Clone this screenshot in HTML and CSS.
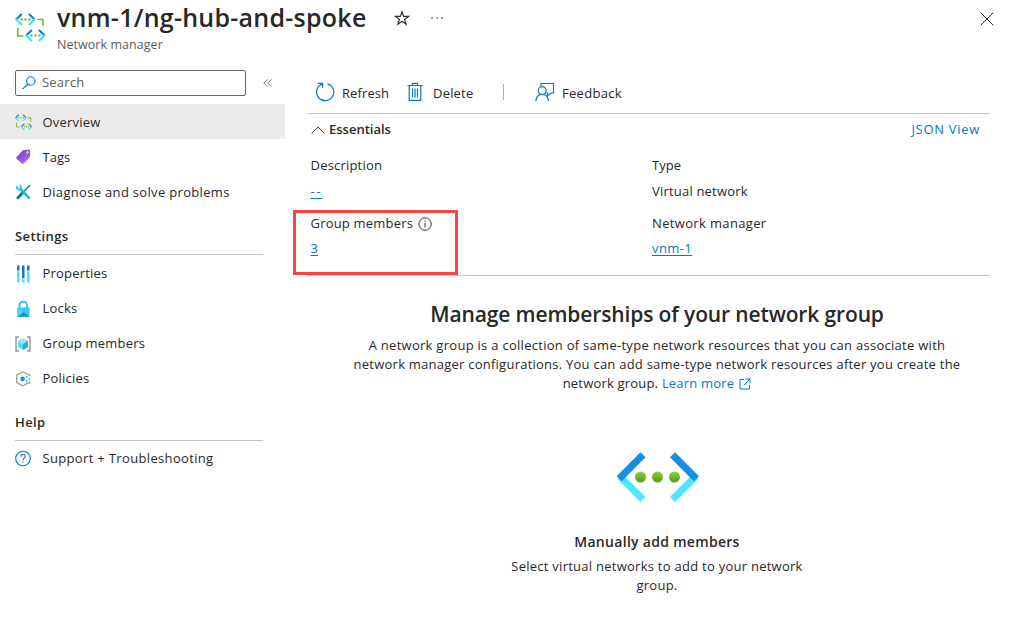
FILE: index.html
```html
<!DOCTYPE html>
<html lang="en">
<head>
<meta charset="utf-8">
<title>vnm-1/ng-hub-and-spoke</title>
<link rel="stylesheet" href="styles.css">
</head>
<body>
<svg class="defs" width="0" height="0" aria-hidden="true">
  <defs>
    <linearGradient id="green" x1="0" y1="0" x2="0" y2="1"><stop offset="0" stop-color="#86d633"/><stop offset="1" stop-color="#5e9624"/></linearGradient>
    <linearGradient id="purple" x1="0" y1="0" x2="1" y2="1"><stop offset="0" stop-color="#6a2fc0"/><stop offset="1" stop-color="#b382ea"/></linearGradient>
    <symbol id="manager" viewBox="0 0 32 32">
      <g fill="none" stroke-width="2.1">
        <path d="M1 8.700 6.800 3M14 3l5.800 5.700" stroke="#0f79d4"/>
        <path d="M1 8.100 6.800 14M14 14l5.800-5.900" stroke="#45ddfb"/>
        <path d="M11 24.700 16.800 19M24 19l5.800 5.700" stroke="#0f79d4"/>
        <path d="M11 24.100 16.800 30M24 30l5.800-5.900" stroke="#45ddfb"/>
        <path d="M22.500 8.500H28v6.800M2.800 17v8h5.500" stroke="#76b82a" stroke-width="1.600"/>
      </g>
      <g fill="#76bc2d"><circle cx="6.500" cy="8.500" r="1.200"/><circle cx="10.500" cy="8.500" r="1.200"/><circle cx="14.500" cy="8.500" r="1.200"/><circle cx="16.500" cy="24.500" r="1.200"/><circle cx="20.500" cy="24.500" r="1.200"/><circle cx="24.500" cy="24.500" r="1.200"/></g>
    </symbol>
  </defs>
</svg>

<header class="header">
  <svg class="header-icon" width="32" height="32"><use href="#manager"/></svg>
  <div class="heading">
    <div class="title-row">
      <h1 class="title">vnm-1/ng-hub-and-spoke</h1>
      <svg class="star" width="16" height="16" viewBox="0 0 16 16" fill="none" stroke="#323130" stroke-width="1.2"><path d="M8 1.800l1.600 4.600h5l-4 3 1.500 4.800L8 11.300l-4.100 2.900 1.500-4.800-4-3h5z"/></svg>
      <svg class="more" width="14" height="4" viewBox="0 0 14 4" fill="#323130"><circle cx="2" cy="2" r=".8"/><circle cx="7" cy="2" r=".8"/><circle cx="12" cy="2" r=".8"/></svg>
    </div>
    <div class="subtitle">Network manager</div>
  </div>
  <svg class="close" width="14" height="14" viewBox="0 0 14 14" stroke="#323130" stroke-width="1"><path d="M.7.7l12.600 12.600M13.300.7.7 13.300"/></svg>
</header>

<div class="body">
  <nav class="sidebar">
    <div class="search-row">
      <div class="search">
        <svg width="14" height="14" viewBox="0 0 14 14" fill="none" stroke="#0078d4" stroke-width="1.1"><circle cx="8.800" cy="5" r="4.200"/><path d="M5.800 8 .6 13.200"/></svg>
        <span>Search</span>
      </div>
      <svg class="collapse" width="9" height="8" viewBox="0 0 9 8" fill="none" stroke="#605e5c" stroke-width=".9"><path d="M4.400.4.8 4l3.600 3.600M8.400.4 4.800 4l3.600 3.600"/></svg>
    </div>

    <div class="top-items">
      <a class="item active"><svg width="18" height="18" viewBox="0 0 32 32"><use href="#manager"/></svg><span>Overview</span></a>
      <a class="item"><svg width="18" height="18" viewBox="0 0 18 18"><path d="M8 2.300 13.800 1.500q1.400 0 1.400 1.400l-.2 5.600q0 .6-.5 1L8.700 15.500q-.9.800-1.800 0L1.600 10.700q-.8-.8.1-1.700z" fill="url(#purple)"/><circle cx="12.600" cy="4.600" r="1.300" fill="#f1e9ff"/><path d="M12.500 4.600q2 .6 1.500 2.500" fill="none" stroke="#54269c" stroke-width=".8"/></svg><span class="t-tags">Tags</span></a>
      <a class="item"><svg width="18" height="18" viewBox="0 0 18 18" fill="none" stroke-linecap="round"><path d="M14.600 2.600 9.400 8" stroke="#198ab3" stroke-width="1.600"/><path d="M8 9.500 2.900 14.700" stroke="#1578a6" stroke-width="3"/><path d="M5.300 6 14.100 14.900" stroke="#1fb6df" stroke-width="2.500"/><path d="M1.800 3.700Q1.900 6.700 4.700 6.600 7.100 5.600 5.500 2.500" stroke="#32cdef" stroke-width="2"/></svg><span class="t-diag">Diagnose and solve problems</span></a>
    </div>

    <h2 class="group">Settings</h2>
    <a class="item"><svg width="18" height="18" viewBox="0 0 18 18"><path fill="#0f78d4" d="M2 .5h2.500v5H2zM7 .5h2.500v12.700H7zM12 .5h2.500v5H12z"/><path fill="#4bdcfb" d="M2 6.200h2.500v11.300H2zM7 14.300h2.500v3.200H7zM12 6.200h2.500v11.300H12z"/></svg><span>Properties</span></a>
    <a class="item"><svg width="18" height="18" viewBox="0 0 18 18"><path d="M4.500 8V5.300a3.700 3.700 0 0 1 7.500 0V8" fill="none" stroke="#27bce5" stroke-width="1.800"/><rect x="2" y="7.400" width="12.600" height="9.600" rx=".7" fill="#36cdee"/><path d="M2.300 16.800 8.300 11.700l6 5.100z" fill="#1597c5"/><path d="M2.300 7.800 8.300 12.200 2.100 16.800z" fill="#55dcf8"/></svg><span>Locks</span></a>
    <a class="item"><svg width="18" height="18" viewBox="0 0 18 18"><path d="M4 2H1v14h3M12 2h3v14h-3" fill="none" stroke="#949494" stroke-width="1.400"/><path d="M8 3.200 13 6v5.900l-5 3-5-3V6z" fill="#50e1fb"/><path d="M3 6l5 3 5-3-5-2.800z" fill="#91ecfb"/><path d="M8 9v5.900l5-3V6z" fill="#25afd9"/></svg><span>Group members</span></a>
    <a class="item"><svg width="18" height="18" viewBox="0 0 18 18"><path d="M13.300 5V4.800L7.700 1.700 1.700 5v7.600l6 3.300 5.600-3.100v-.4" fill="none" stroke="#999" stroke-width="1.200"/><circle cx="7.600" cy="8.900" r="2.300" fill="#1696c8"/><g fill="#32bede"><circle cx="11.700" cy="6.700" r="1"/><circle cx="11.700" cy="11" r="1"/><circle cx="14.400" cy="5" r="1"/><circle cx="14.400" cy="8.900" r="1"/><circle cx="14.400" cy="12.700" r="1"/></g></svg><span>Policies</span></a>

    <h2 class="group help">Help</h2>
    <a class="item"><svg width="18" height="18" viewBox="0 0 18 18" fill="none" stroke="#0078d4" stroke-width="1.100"><circle cx="8" cy="8.500" r="7.300"/><path d="M5.800 6.700C5.800 5.200 6.700 4.500 8 4.500s2.200.8 2.200 2C10.200 8.100 8 8.200 8 10.200M8 11.500v1.300"/></svg><span class="t-support">Support + Troubleshooting</span></a>
  </nav>

  <main class="main">
    <div class="toolbar">
      <a class="tool refresh"><svg width="20" height="20" viewBox="0 0 20 20" fill="none" stroke="#0078d4" stroke-width="1.200"><path d="M12.500 1.800A8.600 8.600 0 1 1 7 2.100M3 1.300h4.600v4.500"/></svg><span>Refresh</span></a>
      <a class="tool delete"><svg width="16" height="20" viewBox="0 0 16 20" fill="none" stroke="#0078d4" stroke-width="1.200"><path d="M.5 3.500h15M5.500 3.300V1.400h5v1.900M2.200 3.600v14.800h11.600V3.600"/><path d="M5.500 6.500v9M8 6.500v9M10.500 6.500v9"/></svg><span>Delete</span></a>
      <i class="divider"></i>
      <a class="tool feedback"><svg width="20" height="20" viewBox="0 0 20 20" fill="none" stroke="#0078d4" stroke-width="1.200"><path d="M6 4.200V1.500h12.500V11H16l-3.500 2.500V11h-1"/><circle cx="7.200" cy="8.700" r="4"/><path d="M1 19v-1.500q1-3.800 4-5M9.300 12.500q3.200 1.300 3.900 5V19"/></svg><span>Feedback</span></a>
    </div>

    <section class="essentials">
      <div class="essentials-head">
        <svg width="14" height="8" viewBox="0 0 14 8" fill="none" stroke="#323130" stroke-width=".9"><path d="M.7 7.300 7 1l6.300 6.300"/></svg>
        <h3 class="essentials-title">Essentials</h3>
        <a class="json">JSON View</a>
      </div>
      <dl class="facts">
        <div class="fact"><dt>Description</dt><dd><a class="link dashes">--</a></dd></div>
        <div class="fact"><dt class="t-type">Type</dt><dd>Virtual network</dd></div>
        <div class="fact low"><dt class="t-group">Group members <svg width="14" height="14" viewBox="0 0 14 14" fill="none" stroke="#323130"><circle cx="7" cy="7" r="6.200"/><path d="M7 6v4.300M7 3.500v1.200"/></svg></dt><dd><a class="link">3</a></dd></div>
        <div class="fact low"><dt class="t-nm">Network manager</dt><dd><a class="link t-vnm">vnm-1</a></dd></div>
      </dl>
      <div class="highlight"></div>
    </section>

    <section class="intro">
      <h2 class="intro-title">Manage memberships of your network group</h2>
      <p class="intro-text"><span class="l1">A network group is a collection of same-type network resources that you can associate with</span><br><span class="l2">network manager configurations. You can add same-type network resources after you create the</span><br><span>network group. <a class="learn">Learn more <svg width="12" height="12" viewBox="0 0 12 12" fill="none" stroke="#0078d4"><path d="M5 1.500H1v9.500h9.500V7M6.500 1h4.500v4.500M11 1 5 7"/></svg></a></span></p>
      <svg class="art" width="84" height="52" viewBox="0 0 84 52">
        <g fill="none" stroke-width="7.200" stroke-linejoin="round">
          <path d="M27 48.500 4 25.500M56.500 48.500 80 25" stroke="#50e6ff"/>
          <path d="M27 3.800 3.200 27.700M56.500 3.800l23.900 23.900" stroke="#1490df"/>
        </g>
        <g fill="url(#green)"><circle cx="24.500" cy="26" r="5.500"/><circle cx="41.500" cy="26" r="5.500"/><circle cx="58.500" cy="26" r="5.500"/></g>
      </svg>
      <h3 class="add-title">Manually add members</h3>
      <p class="add-text">Select virtual networks to add to your network<br>group.</p>
    </section>
  </main>
</div>
</body>
</html>
```
FILE: styles.css
```css
* { box-sizing: border-box; }
body {
  margin: 0;
  height: 640px;
  overflow: hidden;
  background: #fff;
  color: #292827;
  font: 13px/19px "Open Sans", "Noto Sans", sans-serif;
  letter-spacing: .2px;
}
h1, h2, h3, p, dl, dt, dd { margin: 0; font: inherit; }
svg { flex: none; display: block; }
.defs { position: absolute; }
span, h1, h2, h3, a { white-space: nowrap; }

.header { display: flex; height: 70px; padding: 0 19px 0 15px; }
.header-icon { margin: 11px 10px 0 0; }
.title-row { display: flex; align-items: center; height: 36px; }
.title { width: 337px; padding-bottom: 2px; font-size: 25px; line-height: 34px; font-weight: 600; letter-spacing: .25px; }
.more { margin-left: 20px; }
.subtitle { font-size: 12.5px; line-height: 17px; letter-spacing: .05px; color: #605e5c; }
.close { margin: 12px 0 0 auto; }

.body { display: flex; }
.sidebar { width: 285px; margin-right: 22px; }
.search-row { display: flex; align-items: center; height: 26px; margin: 0 0 8px 15px; }
.search {
  display: flex; align-items: center; gap: 6px;
  width: 231px; height: 26px; padding: 0 0 1px 6px;
  border: 1px solid #6b6967; border-radius: 2px; color: #605e5c;
}
.collapse { margin-left: 17px; }
.item { display: flex; align-items: center; gap: 9.5px; height: 35px; padding-left: 15px; }
.top-items .item span { padding-top: 2px; }
.active { background: #edebe9; }
.t-tags { letter-spacing: 0; }
.t-diag { letter-spacing: .32px; }
.t-support { letter-spacing: .34px; }
.group {
  height: 46px; margin: 0 22px 1px 15px; padding-top: 18px;
  border-bottom: 1px solid #c8c6c4; font-weight: 600; letter-spacing: .4px;
}
.help { height: 45px; margin-bottom: 0; padding-top: 17px; }

.main { width: 683px; }
.toolbar { display: flex; align-items: center; height: 44px; padding-left: 8px; border-bottom: 1px solid #c8c6c4; }
.tool { display: flex; align-items: center; gap: 7px; }
.tool span { padding-top: 3px; }
.refresh { width: 92px; letter-spacing: .1px; }
.delete { gap: 10px; width: 96px; }
.feedback { letter-spacing: .3px; }
.divider { width: 1px; height: 16px; margin-right: 31px; background: #85b4dc; }

.essentials { position: relative; height: 162px; border-bottom: 1px solid #c8c6c4; }
.essentials-head { display: flex; align-items: center; height: 31px; padding: 0 10px 0 4px; }
.essentials-title { margin-left: 4px; font-weight: 600; letter-spacing: 0; }
.json { margin-left: auto; letter-spacing: .7px; }
.json, .learn, .link { color: #0078d4; }
.link { text-decoration: underline; text-underline-offset: 2px; }
.dashes { letter-spacing: 1.8px; }
.facts { display: grid; grid-template-columns: 341.5px 1fr; grid-template-rows: 58px 58px; padding: 11px 0 0 3.5px; }
.fact { display: grid; grid-template-rows: 19px 19px; row-gap: 7px; align-content: start; }
.low { row-gap: 6px; }
.t-type { letter-spacing: 0; }
.t-nm { letter-spacing: .35px; }
.t-vnm { letter-spacing: .4px; }
.t-group { display: flex; align-items: center; gap: 5px; }
.highlight { position: absolute; left: -14px; top: 96px; width: 165px; height: 65px; border: 3px solid #fb4545; }

.intro { display: flex; flex-direction: column; align-items: center; padding-top: 24px; margin-left: 17px; text-align: center; }
.intro-title { font-size: 21px; line-height: 28px; font-weight: 600; letter-spacing: -.13px; }
.intro-text { margin-top: 8px; }
.l1 { letter-spacing: .28px; }
.l2 { letter-spacing: .24px; }
.learn { display: inline-flex; align-items: center; gap: 5px; }
.art { margin: 58px 0 0 1px; }
.add-title { margin-top: 29px; font-size: 14px; font-weight: 600; letter-spacing: .3px; }
.add-text { margin-top: 6px; letter-spacing: .26px; }
```
